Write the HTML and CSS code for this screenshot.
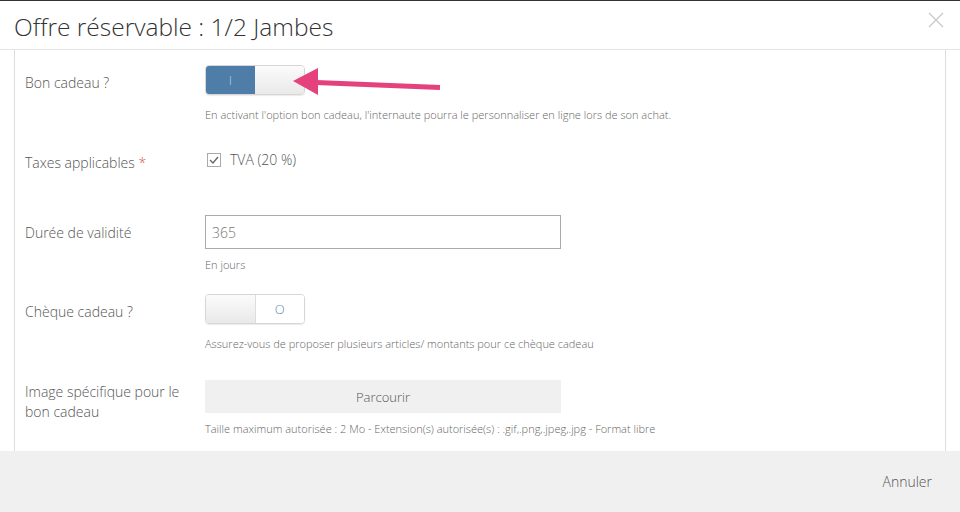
FILE: index.html
```html
<!DOCTYPE html>
<html lang="fr">
<head>
    <meta charset="UTF-8">
    <title>Offre réservable : 1/2 Jambes</title>
    <link rel="stylesheet" href="styles.css">
</head>
<body>
    <div class="modal">
        <div class="modal-header">
            <h1>Offre réservable : 1/2 Jambes</h1>
            <svg class="close" width="16" height="16" viewBox="0 0 16 16">
                <path d="M1 1 L15 15 M15 1 L1 15" stroke="#c8c8c8" stroke-width="1.3" fill="none"/>
            </svg>
        </div>
        <div class="modal-body">
            <div class="panel">
                <div class="row row-gift">
                    <label class="lbl">Bon cadeau ?</label>
                    <div class="field">
                        <div class="toggle">
                            <span class="on">I</span>
                            <span class="off"></span>
                        </div>
                        <p class="help">En activant l'option bon cadeau, l'internaute pourra le personnaliser en ligne lors de son achat.</p>
                    </div>
                </div>
                <div class="row row-tax">
                    <label class="lbl">Taxes applicables <span class="req">*</span></label>
                    <div class="field">
                        <div class="check">
                            <span class="box">
                                <svg width="10" height="10" viewBox="0 0 10 10"><path d="M1 5 L4 8 L9 2" stroke="#666" stroke-width="1.4" fill="none"/></svg>
                            </span>
                            TVA (20 %)
                        </div>
                    </div>
                </div>
                <div class="row row-days">
                    <label class="lbl">Durée de validité</label>
                    <div class="field">
                        <div class="input">365</div>
                        <p class="help help-tight">En jours</p>
                    </div>
                </div>
                <div class="row row-cheque">
                    <label class="lbl">Chèque cadeau ?</label>
                    <div class="field">
                        <div class="toggle">
                            <span class="off"></span>
                            <span class="on-white">O</span>
                        </div>
                        <p class="help">Assurez-vous de proposer plusieurs articles/ montants pour ce chèque cadeau</p>
                    </div>
                </div>
                <div class="row row-image">
                    <label class="lbl lbl-top">Image spécifique pour le bon cadeau</label>
                    <div class="field">
                        <div class="browse">Parcourir</div>
                        <p class="help help-tight">Taille maximum autorisée : 2 Mo - Extension(s) autorisée(s) : .gif,.png,.jpeg,.jpg - Format libre</p>
                    </div>
                </div>
            </div>
        </div>
        <div class="modal-footer">
            <span class="cancel">Annuler</span>
        </div>
        <!-- flèche d'annotation -->
        <svg class="arrow" width="160" height="45" viewBox="0 0 160 45">
            <path d="M26 22.5 L150 27.5" stroke="#e5417c" stroke-width="5" fill="none"/>
            <polygon points="3,21 28,8 28,35" fill="#e5417c"/>
        </svg>
    </div>
</body>
</html>
```

FILE: styles.css
```css
body {
    margin: 0;
    font-family: "Open Sans", Arial, sans-serif;
    font-weight: 300;
    color: #555;
    background: #fff;
}
.modal {
    position: relative;
    width: 960px;
    height: 512px;
    border-top: 1px solid #333;
    box-sizing: border-box;
    overflow: hidden;
}
.modal-header {
    height: 48px;
    border-bottom: 1px solid #e5e5e5;
    display: flex;
    align-items: center;
    justify-content: space-between;
    padding: 0 16px 0 14px;
}
.modal-header h1 {
    margin: 0;
    font-size: 24.5px;
    font-weight: 300;
    color: #333;
    position: relative;
    top: 1px;
}
.close {
    position: relative;
    top: -5px;
}
.modal-body {
    height: 401px;
    overflow: hidden;
}
.panel {
    margin: 0 14px;
    height: 100%;
    border-left: 1px solid #ddd;
    border-right: 1px solid #ddd;
    padding: 15px 0 0 10px;
    box-sizing: border-box;
}
.row {
    display: grid;
    grid-template-columns: 180px 1fr;
}
.lbl {
    font-size: 14px;
    line-height: 20px;
    padding-top: 8px;
    color: #555;
}
.lbl-top {
    padding-top: 2px;
    width: 165px;
}
.req {
    color: #e05050;
}
.field {
    display: flex;
    flex-direction: column;
    align-items: flex-start;
}
.help {
    margin: 12px 0 0;
    font-size: 11px;
    line-height: 16px;
    color: #666;
}
.help-tight {
    margin-top: 8px;
}
.row-tax {
    margin-top: 27px;
}
.row-tax .lbl {
    padding-top: 3px;
}
.row-days {
    margin-top: 42px;
}
.row-cheque {
    margin-top: 21px;
}
.row-image {
    margin-top: 28px;
}
/* interrupteur oui / non */
.toggle {
    width: 98px;
    height: 28px;
    border: 1px solid #d6d6d6;
    border-radius: 4px;
    display: flex;
    overflow: hidden;
    box-shadow: 0 1px 1px rgba(0, 0, 0, 0.08);
}
.toggle span {
    flex: 1;
    display: flex;
    align-items: center;
    justify-content: center;
    font-size: 13px;
}
.toggle .on {
    background: #4e7ea8;
    color: #b9cde0;
}
.toggle .off {
    background: linear-gradient(#fbfbfb, #e9e9e9);
    border-right: 1px solid #ddd;
}
.toggle .on + .off {
    border-right: none;
}
.toggle .on-white {
    background: #fff;
    color: #5b87b0;
}
.check {
    display: flex;
    align-items: center;
    font-size: 14px;
    line-height: 20px;
    color: #555;
    padding-left: 2px;
}
.box {
    width: 12px;
    height: 12px;
    border: 1px solid #aaa;
    margin-right: 9px;
    display: flex;
    align-items: center;
    justify-content: center;
}
.input {
    width: 348px;
    height: 32px;
    border: 1px solid #aaa;
    padding-left: 6px;
    display: flex;
    align-items: center;
    font-size: 14px;
    color: #777;
}
.browse {
    width: 356px;
    height: 33px;
    background: #f0f0f0;
    display: flex;
    align-items: center;
    justify-content: center;
    font-size: 13px;
    color: #555;
}
.modal-footer {
    height: 61px;
    background: #f0f0f0;
    display: flex;
    align-items: center;
    justify-content: flex-end;
    padding-right: 28px;
}
.cancel {
    font-size: 14px;
    color: #555;
}
.arrow {
    position: absolute;
    left: 290px;
    top: 59px;
}
```
